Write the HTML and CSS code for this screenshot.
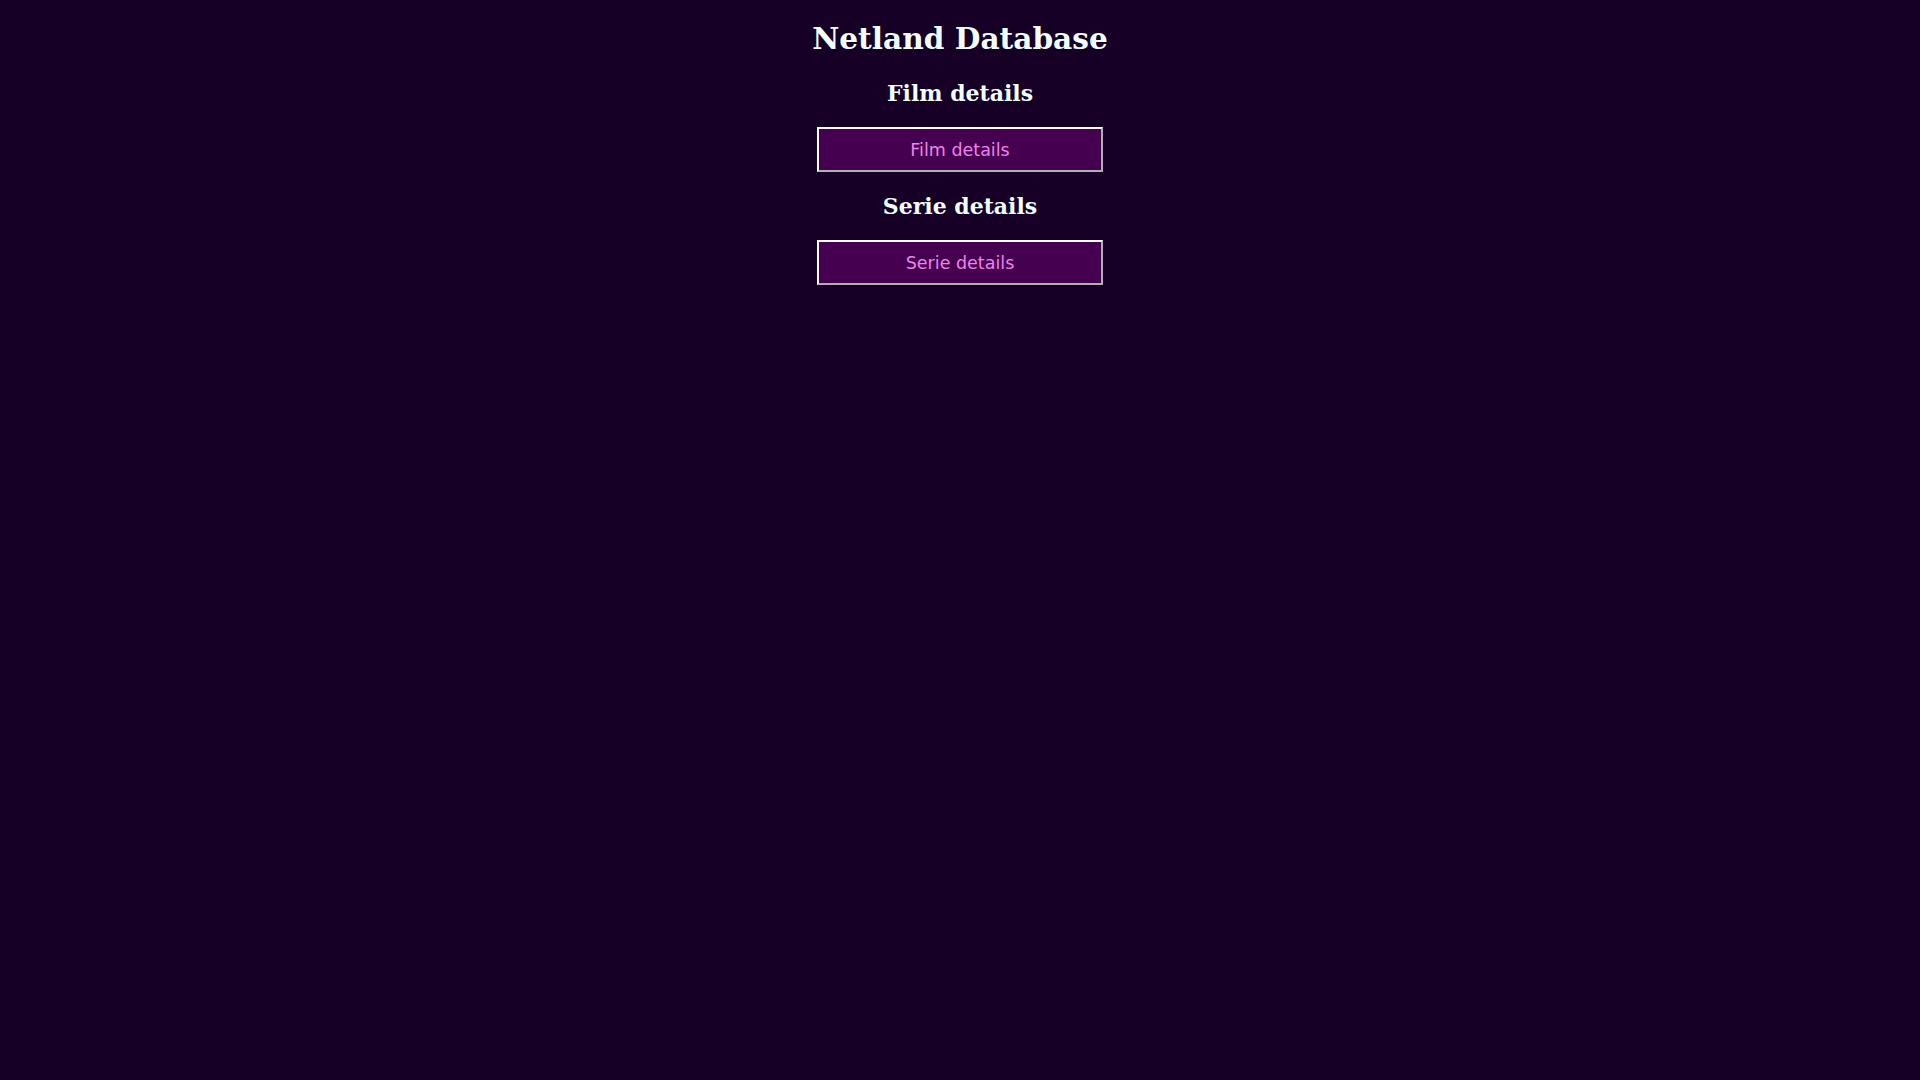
FILE: index.html
```html
<!DOCTYPE html>
<html lang="nl">
<head>
<meta charset="utf-8">
<title>Netland Database</title>
<link rel="stylesheet" href="styles.css">
</head>
<body>
<main class="page">
  <h1 class="title">Netland Database</h1>
  <h2 class="section-title">Film details</h2>
  <button class="nav-button" type="button">Film details</button>
  <h2 class="section-title">Serie details</h2>
  <button class="nav-button" type="button">Serie details</button>
</main>
</body>
</html>
```
FILE: styles.css
```css
html, body {
  margin: 0;
  padding: 0;
  background: #170025;
}
body {
  min-height: 1080px;
}
.page {
  display: flex;
  flex-direction: column;
  align-items: center;
  gap: 19px;
  padding-top: 19px;
}
.title {
  margin: 0;
  font-family: "DejaVu Serif", "Liberation Serif", serif;
  font-weight: bold;
  font-size: 29.6px;
  line-height: 40px;
  color: #f0ffff;
}
.section-title {
  margin: 0;
  font-family: "DejaVu Serif", "Liberation Serif", serif;
  font-weight: bold;
  font-size: 22px;
  line-height: 30px;
  color: #f0ffff;
}
.nav-button {
  width: 286px;
  height: 45px;
  background: #460050;
  color: #ee82ee;
  border: 2px solid;
  border-color: #ffffff #b0b0b0 #b0b0b0 #ffffff;
  font-family: "DejaVu Sans", "Open Sans", sans-serif;
  font-size: 17.5px;
  padding: 0;
  cursor: pointer;
}
```
